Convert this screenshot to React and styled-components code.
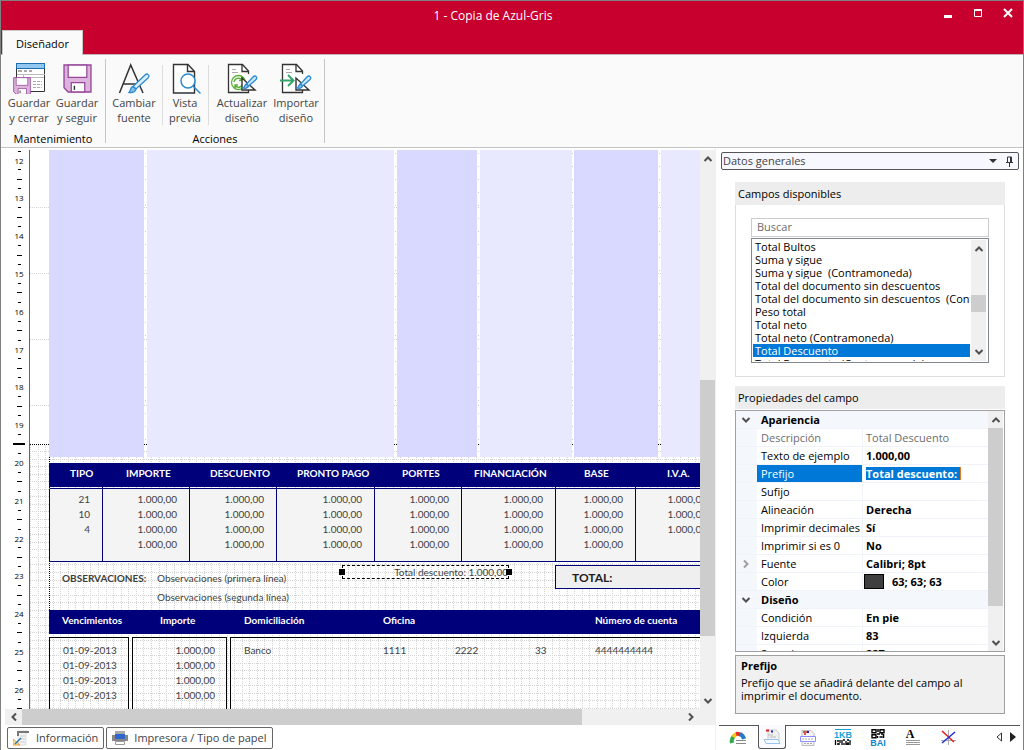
import React, { useState } from "react";
import styled, { createGlobalStyle, css } from "styled-components";

const GlobalStyle = createGlobalStyle`
  * {
    box-sizing: border-box;
  }

  body {
    margin: 0;
    background: #fff;
    color: #000;
    font: 11px/15px "Open Sans", "Noto Sans", sans-serif;
  }

  button,
  input,
  select {
    font: inherit;
    color: inherit;
    margin: 0;
    padding: 0;
    border: 0;
    background: none;
    border-radius: 0;
    outline: none;
  }

  h2 {
    margin: 0;
    font: inherit;
  }
`;

const Window = styled.div`
  display: flex;
  flex-direction: column;
  height: 100vh;
  border: 1px solid #808080;
  border-bottom: 0;
  overflow: hidden;
`;

const TitleBar = styled.header`
  display: grid;
  grid-template-columns: 1fr auto 1fr;
  grid-template-rows: 29px 24px;
  flex: none;
  background: #c8002d;
  border-bottom: 1px solid #c0b4b6;
`;

const Title = styled.h1`
  grid-column: 2;
  margin: 0;
  padding-right: 38px;
  color: #fff;
  font-size: 12px;
  font-weight: 400;
  line-height: 30px;
`;

const WindowButtons = styled.div`
  display: flex;
  justify-content: flex-end;
  align-items: center;
  padding: 0 5px 6px 0;
  gap: 10px;

  button {
    display: flex;
    justify-content: center;
    width: 20px;
  }
`;

const RibbonTab = styled.button`
  grid-row: 2;
  justify-self: start;
  width: 81px;
  height: 25px;
  margin-left: 1px;
  border: 1px solid #c8c8c8;
  border-bottom: 0;
  background: #fafafa;
  font-size: 11px;
`;

const Ribbon = styled.nav`
  display: flex;
  flex: none;
  height: 93px;
  padding: 4px 0;
  background: #fafafa;
  border-bottom: 1px solid #c4c4c4;
`;

const RibbonGroup = styled.section`
  display: flex;
  flex-direction: column;
  align-items: center;
  justify-content: space-between;
  padding: 1px 4px 0;
  border-right: 1px solid #c6c6c6;

  h2 {
    line-height: 9px;
  }
`;

const GroupButtons = styled.div`
  display: flex;
`;

const RibbonButton = styled.button`
  display: flex;
  flex-direction: column;
  align-items: center;
  width: ${({ $width }) => $width}px;
  color: #444;
  line-height: 15px;
  white-space: pre;

  svg {
    margin: 2px 0 1px;
  }
`;

const Separator = styled.span`
  width: 1px;
  height: 60px;
  margin: 5px 3px 0 4px;
  background: #dcdcdc;
`;

const Main = styled.main`
  display: flex;
  flex: 1;
  min-height: 0;
`;

const Designer = styled.section`
  display: flex;
  flex-direction: column;
  flex: 1;
  min-width: 0;
  padding: 2px 0 0 4px;
`;

const Workspace = styled.div`
  display: flex;
  flex: 1;
  min-height: 0;
`;

const RulerBox = styled.div`
  flex: none;
  width: 25px;
  overflow: hidden;
  border-right: 1px solid #666;

  text {
    font: 8px "Open Sans", sans-serif;
  }
`;

const Canvas = styled.div`
  position: relative;
  flex: 1;
  min-width: 0;
  overflow: hidden;
  color: #3f3f3f;
  font-family: Lato, sans-serif;
  font-size: 10px;
`;

const Grid = styled.svg`
  position: absolute;
  inset: 0;
  width: 100%;
  height: 100%;
`;

const Sheet = styled.div`
  position: relative;
  width: 1000px;
  padding-left: 19px;
`;

const Bands = styled.div`
  display: flex;
  height: 307px;
  margin-bottom: 6px;
`;

const Band = styled.div`
  width: ${({ $width }) => $width}px;
  margin-right: ${({ $gap }) => $gap}px;
  background: ${({ $dark }) => ($dark ? "#d9d9ff" : "#e8e8ff")};
`;

const TaxTable = styled.table`
  table-layout: fixed;
  width: 706px;
  border-spacing: 0;
  border-right: 1px solid #00007a;

  th {
    height: 24px;
    padding: 0 0 3px;
    background: #00007a;
    color: #fff;
    text-align: left;
  }

  td {
    height: 15px;
    padding: 0 12px 0 0;
    background: #f4f4f4;
    border-left: 1px solid #00007a;
    text-align: right;
    line-height: 15px;
  }

  td:last-child {
    padding-right: 48px;
  }

  tbody tr:first-child td {
    height: 2px;
    padding: 0;
    background: none;
    border-bottom: 1px solid #00007a;
  }

  tbody tr:first-child td:first-child {
    border-left-color: transparent;
  }

  tbody tr:nth-child(2) td {
    padding-top: 3px;
  }

  tbody tr:last-child td {
    padding-bottom: 9px;
    border-bottom: 1px solid #00007a;
  }
`;

const TaxHead = styled.th`
  && {
    padding-left: ${({ $pad }) => $pad}px;
  }
`;

const Remarks = styled.div`
  display: grid;
  grid-template-columns: 95px 398px 1fr;
  height: 48px;
  padding: 7px 0 0 13px;
  line-height: 19px;
`;

const TotalBox = styled.div`
  height: 24px;
  margin-top: -4px;
  padding-left: 16px;
  border: 1px solid #00007a;
  background: #efefef;
  color: #222;
  font-size: 12px;
  font-weight: 700;
  line-height: 24px;
`;

const SelectedField = styled.div`
  position: absolute;
  left: 312px;
  top: 415px;
  width: 167px;
  height: 14px;
  border: 1px dashed #000;
  text-align: right;
  line-height: 12px;

  &::before,
  &::after {
    content: "";
    position: absolute;
    top: 3px;
    width: 6px;
    height: 6px;
    background: #000;
  }

  &::before {
    left: -4px;
  }

  &::after {
    right: -4px;
  }
`;

const DueHead = styled.div`
  display: grid;
  grid-template-columns: 98px 84px 139px 212px 1fr;
  padding: 0 0 3px 13px;
  background: #00007a;
  color: #fff;
  font-weight: 700;
  line-height: 21px;
`;

const DueBody = styled.div`
  display: flex;
  gap: 3px;
  margin-top: 3px;
  line-height: 15px;
`;

const DueBox = styled.div`
  width: ${({ $width }) => $width}px;
  height: 130px;
  padding: 5px 11px 0 13px;
  border: 1px solid #000;
  text-align: ${({ $align }) => $align || "left"};
  white-space: nowrap;
`;

const BankRow = styled.div`
  display: grid;
  grid-template-columns: 139px 72px 80px 60px 1fr;
`;

const ScrollTrack = styled.div`
  display: flex;
  flex: none;
  align-items: center;
  background: #f0f0f0;

  ${({ $vertical }) =>
    $vertical
      ? css`
          flex-direction: column;
          width: 15px;
        `
      : css`
          height: 16px;
          padding-right: 16px;
        `}

  button {
    display: flex;
    flex: none;
    align-items: center;
    justify-content: center;
    width: ${({ $vertical }) => ($vertical ? 15 : 17)}px;
    height: 17px;
  }
`;

const ScrollThumb = styled.span`
  flex: ${({ $size }) => $size} 0 0;
  align-self: stretch;
  background: #cdcdcd;
`;

const ScrollSpace = styled.span`
  flex: ${({ $size }) => $size} 0 0;
`;

const FooterTabs = styled.div`
  display: flex;
  flex: none;
  gap: 2px;
  height: 25px;
  padding: 2px 2px 1px;
`;

const FooterTab = styled.button`
  display: flex;
  align-items: center;
  gap: 6px;
  padding: 0 5px 1px 5px;
  border: 1px solid #666;
  border-radius: 2px;
  color: #444;
  white-space: nowrap;
`;

const Sidebar = styled.aside`
  display: flex;
  flex-direction: column;
  flex: none;
  width: 308px;
  padding: 4px 3px 0;
  border-left: 1px solid #f0f0f0;
`;

const PanelPicker = styled.div`
  display: flex;
  align-items: center;
  flex: none;
  height: 18px;
  margin: 0 1px 0 2px;
  padding-right: 4px;
  border: 1px solid #555;
  border-radius: 2px;
  background: #f7f7ff;
  color: #444;

  select {
    flex: 1;
    height: 16px;
    padding-left: 1px;
    appearance: none;
    line-height: 16px;
  }

  svg {
    flex: none;
    margin-left: 8px;
  }
`;

const Panel = styled.section`
  display: flex;
  flex-direction: column;
  flex: none;
  margin: ${({ $top }) => $top}px 15px 0 16px;

  h2 {
    padding-left: 3px;
    background: #ededed;
    line-height: 23px;
    height: 23px;
  }
`;

const FieldPicker = styled.div`
  padding: 13px 15px;
  border: 1px solid #ddd;
  border-top: 0;
`;

const SearchInput = styled.input`
  display: block;
  width: 100%;
  height: 19px;
  margin-bottom: 1px;
  padding: 0 0 2px 5px;
  border: 1px solid #ccc;

  &::placeholder {
    color: #6d6d6d;
    opacity: 1;
  }
`;

const ListFrame = styled.div`
  display: flex;
  height: 125px;
  padding: 1px 2px 1px 1px;
  border: 1px solid #828790;
`;

const FieldList = styled.ul`
  flex: 1;
  min-width: 0;
  margin: 0;
  padding: 0;
  overflow: hidden;
  list-style: none;
`;

const FieldOption = styled.li`
  height: 13px;
  margin-right: 1px;
  padding-left: 2px;
  overflow: hidden;
  line-height: 13px;
  white-space: pre;
  cursor: default;
  background: ${({ $selected }) => ($selected ? "#0078d7" : "transparent")};
  color: ${({ $selected }) => ($selected ? "#fff" : "#000")};
`;

const PropertyFrame = styled.div`
  display: flex;
  height: 242px;
  margin-top: 1px;
  padding-right: 1px;
  border: 1px solid #a0a0a0;
  overflow: hidden;
`;

const PropertyScroll = styled.div`
  flex: 1;
  min-width: 0;
  overflow: hidden;
`;

const PropertyTable = styled.table`
  table-layout: fixed;
  width: 100%;
  border-spacing: 0;

  th,
  td {
    height: 18px;
    padding: 0 0 0 4px;
    border-bottom: 1px solid #f0f3f9;
    font-weight: 400;
    line-height: 17px;
    text-align: left;
    white-space: nowrap;
  }

  td:first-child {
    padding: 0 2px 0 0;
    background: #f4f7fc;
    text-align: center;
  }

  td:last-child {
    padding-left: 3px;
    border-left: 1px solid #f0f3f9;
  }

  td svg {
    display: block;
    margin: 0 auto;
  }
`;

const CategoryRow = styled.tr`
  background: #f4f7fc;

  th {
    font-weight: 700;
  }
`;

const PropertyRow = styled.tr`
  color: ${({ $muted }) => ($muted ? "#6d6d6d" : "#000")};

  th {
    background: ${({ $active }) => ($active ? "#0078d7" : "#fff")};
    color: ${({ $active }) => ($active ? "#fff" : "inherit")};
  }
`;

const ValueCell = styled.div`
  display: flex;
  align-items: center;
  height: 17px;
`;

const ValueInput = styled.input`
  width: 95px;
  height: 13px;
  font-weight: ${({ $muted }) => ($muted ? 400 : 700)};
  line-height: 13px;
  background: ${({ $active }) => ($active ? "#0078d7" : "none")};
  color: ${({ $active }) => ($active ? "#fff" : "inherit")};
  border-right: ${({ $active }) => ($active ? "1px solid #e87a1d" : "0")};
`;

const Swatch = styled.span`
  width: 20px;
  height: 15px;
  margin: 0 8px 0 -2px;
  border: 1px solid #000;
  background: #3f3f3f;
`;

const HelpBox = styled.div`
  height: 59px;
  margin-top: 3px;
  padding: 3px 5px;
  border: 1px solid #a0a0a0;
  background: #f0f0f0;
  line-height: 13px;

  strong {
    display: block;
    margin-bottom: 4px;
  }
`;

const IconTabs = styled.div`
  display: flex;
  flex: none;
  align-items: flex-start;
  height: 25px;
  margin-top: auto;
  padding-left: 1px;
  border-top: 1px solid #555;
`;

const IconTab = styled.button`
  display: flex;
  align-items: center;
  justify-content: center;
  width: ${({ $active }) => ($active ? 28 : 35)}px;
  height: 24px;

  ${({ $active }) =>
    $active &&
    css`
      margin: -1px 4px 0 3px;
      border: 1px solid #555;
      border-top: 0;
      border-radius: 0 0 3px 3px;
      background: #fafaff;
    `}
`;

const TabArrows = styled.div`
  display: flex;
  gap: 8px;
  margin: 6px 4px 0 auto;
`;

const Chevron = ({ dir = "down", color = "#505050" }) => {
  const angle = { down: 0, left: 90, up: 180, right: 270 }[dir];
  return (
    <svg width="10" height="10" viewBox="0 0 10 10" aria-hidden="true">
      <path
        d="M1.500 3 5 6.500 8.500 3"
        fill="none"
        stroke={color}
        strokeWidth="2"
        transform={`rotate(${angle} 5 5)`}
      />
    </svg>
  );
};

const ScrollBar = ({ vertical, before, thumb, after }) => (
  <ScrollTrack $vertical={vertical}>
    <button aria-label={vertical ? "Subir" : "Izquierda"}>
      <Chevron dir={vertical ? "up" : "left"} />
    </button>
    <ScrollSpace $size={before} />
    <ScrollThumb $size={thumb} />
    <ScrollSpace $size={after} />
    <button aria-label={vertical ? "Bajar" : "Derecha"}>
      <Chevron dir={vertical ? "down" : "right"} />
    </button>
  </ScrollTrack>
);

const Floppy = ({ x, y, size }) => (
  <svg x={x} y={y} width={size} height={size} viewBox="0 0 28 28">
    <path d="M1 1h26v26H5l-4-4z" fill="#dcb4dc" stroke="#96469b" strokeWidth="1.300" />
    <path d="M5 1h18v12H5z" fill="#fff" stroke="#96469b" strokeWidth="1.200" />
    <path d="M8 27v-9h13v9z" fill="#fff" stroke="#96469b" strokeWidth="1.200" />
    <path d="M11 21v4" stroke="#333" strokeWidth="1.400" />
  </svg>
);

const Pen = () => (
  <g fill="#fff" stroke="#2b8bd0" strokeWidth="1.300">
    <path d="M30 14.500c1.500 1 .5 2.500-.5 3.500l-7 6-2-2 6.500-7c1-1 2-1.500 3-.5z" fill="#cfe6f7" />
    <path d="M20.500 22c-2 .5-1.500 3-3.500 4 2 .8 5 .2 5.500-2z" fill="#83beec" />
  </g>
);

const SheetOutline = () => (
  <>
    <path d="M22.500 12V9l-6-6.500H2.500v28h20V28" fill="#fff" stroke="#333" strokeWidth="1.300" />
    <path d="M16 2.500V9.500h6.500" fill="none" stroke="#333" strokeWidth="1.300" />
    <path d="M6 7.500h4M6 10.500h6" stroke="#aaa" />
  </>
);

const ribbonIcons = {
  saveClose: (
    <>
      <path d="M3.500 1.500h28v28h-28z" fill="#fff" stroke="#333" />
      <path d="M3.500 1.500h28v5h-28z" fill="#92c8f0" stroke="#1a6fb5" />
      <path d="M5 9h4m2 0h3m2 0h3" stroke="#555" />
      <path d="M4 12.500h28M10.500 12v18M10 15.500h21" stroke="#bbb" />
      <path d="M20 19.500h9M20 22.500h9M20 25.500h9" stroke="#aaa" strokeDasharray="3 1" />
      <Floppy x={0} y={15} size={18} />
    </>
  ),
  save: <Floppy x={2} y={2} size={29} />,
  font: (
    <>
      <path d="M1.500 31 12.700 3 25 31M5.500 22h16" fill="none" stroke="#333" strokeWidth="1.500" />
      <g stroke="#2b8bd0" strokeWidth="1.300">
        <path d="M30 12.500c1.500 1 1 2.500 0 3.500L18 27l-3-2.500L27 13c1-1 2-1.300 3-.5z" fill="#dceefa" />
        <path d="M15 24.500c-3 .5-2 4-4 6 3 .5 6-.5 7-3.500z" fill="#83beec" />
      </g>
    </>
  ),
  preview: (
    <>
      <path d="M25.500 31H4.500V2.500H19l6.500 7z" fill="#fff" stroke="#333" strokeWidth="1.400" />
      <path d="M18.500 2.500v7h7" fill="none" stroke="#333" strokeWidth="1.400" />
      <circle cx="19" cy="19" r="7" fill="#fff" stroke="#2b8bd0" strokeWidth="1.500" />
      <path d="m24 24 7.500 7.500" stroke="#2b8bd0" strokeWidth="1.500" />
    </>
  ),
  refresh: (
    <>
      <SheetOutline />
      <circle cx="12.500" cy="20.500" r="7" fill="#fff" stroke="#5cb03a" strokeWidth="1.300" />
      <path d="M8 20a4.500 4.500 0 0 1 8-2m0-3v3.500h-3M17 21a4.500 4.500 0 0 1-8 2.500m0 3V23h3" fill="none" stroke="#5cb03a" strokeWidth="1.500" />
      <path d="M16 16v12h13z" fill="#fff" stroke="#333" strokeWidth="1.400" />
      <Pen />
    </>
  ),
  import: (
    <>
      <SheetOutline />
      <path d="M0 18.500h13M8 13l5.500 5.500L8 24" fill="none" stroke="#34a667" strokeWidth="2" />
      <path d="M16 16v12h13z" fill="#fff" stroke="#333" strokeWidth="1.400" />
      <Pen />
    </>
  ),
};

const RibbonIcon = ({ name }) => (
  <svg width="32" height="32" viewBox="0 0 32 32" aria-hidden="true">
    {ribbonIcons[name]}
  </svg>
);

const tabIcons = {
  gauge: (
    <>
      <path d="M3 14a7 7 0 0 1 2-7" fill="none" stroke="#2fa84f" strokeWidth="4" />
      <path d="M4 8a6 6 0 0 1 4-3" fill="none" stroke="#f2c91d" strokeWidth="4" />
      <path d="M7 5a6 6 0 0 1 5 1" fill="none" stroke="#e5302a" strokeWidth="4" />
      <path d="M11 5a7 7 0 0 1 4 5" fill="none" stroke="#2878c8" strokeWidth="4" />
      <path d="M7 11.500h10M7 14.500h10" stroke="#888" />
    </>
  ),
  page: (
    <>
      <path d="M5 2h8l3 3v10H5z" fill="#f0f0f0" stroke="#ccc" />
      <path d="M3 2.500h3" stroke="#d22" strokeWidth="2" />
      <path d="M8 3.500h2" stroke="#22a" strokeWidth="2" />
      <path d="M5 7h5M7 9h6" stroke="#bbb" />
      <path d="M1 11.500h14l2 4H3z" fill="#f4f8ff" stroke="#9ac4ea" />
    </>
  ),
  section: (
    <>
      <path d="M3 1.500h9l3 3v12H3z" fill="#f4f4f4" stroke="#bbb" />
      <path d="M4 3h4M5 5h2" stroke="#c22" strokeWidth="1.500" />
      <path d="M8 3h2" stroke="#22a" strokeWidth="2" />
      <path d="M1.500 7.500h15v5h-15z" fill="#fff" stroke="#8c8cff" />
      <path d="M3 10h12M5 14.500h8" stroke="#aaa" strokeDasharray="2 1" />
    </>
  ),
  bytes: (
    <>
      <path d="M1 .5h16" stroke="#1d9fd8" />
      <text x="9" y="9" textAnchor="middle" fill="#1d9fd8" fontSize="9" fontWeight="700" fontFamily="Liberation Sans">
        1KB
      </text>
      <path d="M1.500 11v5M3 12h2m0 2v2m1-5v3m2-3v5m1-5h2m-1 3v2m2-4v4m1-5h2m-1 2v3m2-5v5M3 15h2m7 0h3" stroke="#000" strokeWidth="1.300" />
    </>
  ),
  qr: (
    <>
      <path d="M3 .7h4v3H3zM11 .7h4v3h-4zM3 5.700h4v3H3z" fill="none" stroke="#000" strokeWidth="1.400" />
      <path d="M9 0v3M8 5h3M8.500 7v2m2-1h3m1-3v4M12 5h2" stroke="#000" strokeWidth="1.500" />
      <text x="9" y="17" textAnchor="middle" fill="#0d84cc" fontSize="9" fontWeight="700" fontFamily="Liberation Sans">
        BAI
      </text>
    </>
  ),
  text: (
    <>
      <text x="6" y="9" textAnchor="middle" fontSize="12" fontWeight="700" fontFamily="Liberation Serif">
        A
      </text>
      <path d="M2 11.500h14M2 13.500h14M2 15.500h14" stroke="#999" />
    </>
  ),
  axes: (
    <>
      <path d="M9.500 1v15M2 11.500h15" stroke="#aaa" />
      <path d="m3 2 12 11" stroke="#e02020" strokeWidth="1.600" />
      <path d="M16 3 3 14" stroke="#2030e0" strokeWidth="1.600" />
    </>
  ),
};

const sideTabs = [
  ["gauge", "Indicadores"],
  ["page", "Datos generales"],
  ["section", "Secciones"],
  ["bytes", "Código de barras"],
  ["qr", "Código QR"],
  ["text", "Texto"],
  ["axes", "Ejes"],
];

// One centimetre on the ruler and on the grid
const CM = 37.8;
const FIRST_Y = 11;

const Ruler = () => {
  const marks = Array.from({ length: 15 }, (_, i) => i + 12);
  return (
    <RulerBox>
      <svg width="24" height="100%" shapeRendering="crispEdges">
        <path d="M13 1.500h3" stroke="#000" />
        {marks.map((cm, i) => {
          const y = Math.floor(FIRST_Y + i * CM);
          const tick = (n) => Math.round(FIRST_Y + (i + n) * CM) - 0.5;
          return (
            <g key={cm} stroke="#000">
              <text x="14" y={y + 3} textAnchor="middle" stroke="none">
                {cm}
              </text>
              <path d={`M13 ${tick(0.25)}h3`} />
              {cm === 19 ? (
                <path d="M8 294h12" strokeWidth="2" />
              ) : (
                <path d={`M12 ${tick(0.5)}h5`} />
              )}
              <path d={`M13 ${tick(0.75)}h3`} />
            </g>
          );
        })}
      </svg>
    </RulerBox>
  );
};

const GridLines = () => {
  const steps = Array.from({ length: 140 }, (_, i) => Math.round(i * 7.56));
  return (
    <Grid shapeRendering="crispEdges" aria-hidden="true">
      <g stroke="#d4d4d4" strokeDasharray="1 1">
        {[57, 123, 189, 255].map((y) => (
          <line key={y} x1="0" x2="100%" y1={y + 0.5} y2={y + 0.5} />
        ))}
        {steps.map((n) => (
          <line key={`h${n}`} x1="0" x2="100%" y1={n + 301.5} y2={n + 301.5} />
        ))}
        {steps.map((n) => (
          <line key={`v${n}`} x1={n + 0.5} x2={n + 0.5} y1="295" y2="100%" />
        ))}
      </g>
      <g stroke="#ccc" strokeDasharray="1 12">
        {[115, 365, 448, 542, 629].map((x) => (
          <line key={x} x1={x + 0.5} x2={x + 0.5} y1="3" y2="294" />
        ))}
      </g>
      <g stroke="#000" strokeDasharray="1 1">
        <line x1="0" x2="100%" y1="294.5" y2="294.5" />
        <line x1="19.5" x2="19.5" y1="307" y2="460" />
      </g>
    </Grid>
  );
};

const bands = [
  [95, 3, true],
  [247, 3, false],
  [80, 3, true],
  [92, 2, false],
  [84, 3, true],
  [90, 3, false],
];

const taxColumns = [
  ["TIPO", 53, 21],
  ["IMPORTE", 87, 24],
  ["DESCUENTO", 87, 21],
  ["PRONTO PAGO", 98, 21],
  ["PORTES", 87, 28],
  ["FINANCIACIÓN", 94, 13],
  ["BASE", 80, 29],
  ["I.V.A.", 120, 32],
];

const amount = "1.000,00";
const taxRows = [
  ["21", ...Array(7).fill(amount)],
  ["10", ...Array(7).fill(amount)],
  ["4", ...Array(7).fill(amount)],
  ["", ...Array(6).fill(amount), ""],
];

const fields = [
  "Total Bultos",
  "Suma y sigue",
  "Suma y sigue  (Contramoneda)",
  "Total del documento sin descuentos",
  "Total del documento sin descuentos  (Contramoneda)",
  "Peso total",
  "Total neto",
  "Total neto (Contramoneda)",
  "Total Descuento",
  "Total Descuento (Contramoneda)",
];

const properties = [
  { category: "Apariencia" },
  { name: "Descripción", value: "Total Descuento", muted: true },
  { name: "Texto de ejemplo", value: "1.000,00" },
  { name: "Prefijo", value: "Total descuento: ", active: true },
  { name: "Sufijo", value: "" },
  { name: "Alineación", value: "Derecha" },
  { name: "Imprimir decimales", value: "Sí" },
  { name: "Imprimir si es 0", value: "No" },
  { name: "Fuente", value: "Calibri; 8pt", expandable: true },
  { name: "Color", value: "63; 63; 63", swatch: true },
  { category: "Diseño" },
  { name: "Condición", value: "En pie" },
  { name: "Izquierda", value: "83" },
  { name: "Superior", value: "227" },
];

const ReportCanvas = () => (
  <Canvas>
    <GridLines />
    <Sheet>
      <Bands>
        {bands.map(([width, gap, dark], i) => (
          <Band key={i} $width={width} $gap={gap} $dark={dark} />
        ))}
      </Bands>
      <TaxTable>
        <colgroup>
          {taxColumns.map(([name, width]) => (
            <col key={name} width={width} />
          ))}
        </colgroup>
        <thead>
          <tr>
            {taxColumns.map(([name, , pad]) => (
              <TaxHead key={name} $pad={pad}>
                {name}
              </TaxHead>
            ))}
          </tr>
        </thead>
        <tbody>
          <tr aria-hidden="true">
            {taxColumns.map(([name]) => (
              <td key={name} />
            ))}
          </tr>
          {taxRows.map((row, i) => (
            <tr key={i}>
              {row.map((cell, j) => (
                <td key={j}>{cell}</td>
              ))}
            </tr>
          ))}
        </tbody>
      </TaxTable>
      <Remarks>
        <strong>OBSERVACIONES:</strong>
        <div>
          Observaciones (primera línea)
          <br />
          Observaciones (segunda línea)
        </div>
        <TotalBox>TOTAL:</TotalBox>
      </Remarks>
      <DueHead>
        <span>Vencimientos</span>
        <span>Importe</span>
        <span>Domiciliación</span>
        <span>Oficina</span>
        <span>Número de cuenta</span>
      </DueHead>
      <DueBody>
        <DueBox $width={80}>
          {[0, 1, 2, 3].map((n) => (
            <div key={n}>01-09-2013</div>
          ))}
        </DueBox>
        <DueBox $width={95} $align="right">
          {[0, 1, 2, 3].map((n) => (
            <div key={n}>{amount}</div>
          ))}
        </DueBox>
        <DueBox $width={700}>
          <BankRow>
            <span>Banco</span>
            <span>1111</span>
            <span>2222</span>
            <span>33</span>
            <span>4444444444</span>
          </BankRow>
        </DueBox>
      </DueBody>
      <SelectedField>Total descuento: 1.000,00</SelectedField>
    </Sheet>
  </Canvas>
);

const App = () => {
  const [selected, setSelected] = useState("Total Descuento");
  const [search, setSearch] = useState("");

  return (
    <Window>
      <GlobalStyle />
      <TitleBar>
        <Title>1 - Copia de Azul-Gris</Title>
        <WindowButtons>
          <button aria-label="Minimizar">
            <svg width="10" height="10">
              <path d="M1 8.500h8" stroke="#fff" strokeWidth="3" />
            </svg>
          </button>
          <button aria-label="Maximizar">
            <svg width="10" height="10">
              <path d="M1.500 2v6.500h7V2M1 2h8" fill="none" stroke="#fff" />
              <path d="M1 2h8" stroke="#fff" strokeWidth="2" />
            </svg>
          </button>
          <button aria-label="Cerrar">
            <svg width="10" height="10">
              <path d="m1 1 8 8M9 1 1 9" stroke="#fff" strokeWidth="2" />
            </svg>
          </button>
        </WindowButtons>
        <RibbonTab>Diseñador</RibbonTab>
      </TitleBar>

      <Ribbon>
        <RibbonGroup>
          <GroupButtons>
            <RibbonButton $width={48}>
              <RibbonIcon name="saveClose" />
              {"Guardar\ny cerrar"}
            </RibbonButton>
            <RibbonButton $width={48}>
              <RibbonIcon name="save" />
              {"Guardar\ny seguir"}
            </RibbonButton>
          </GroupButtons>
          <h2>Mantenimiento</h2>
        </RibbonGroup>
        <RibbonGroup>
          <GroupButtons>
            <RibbonButton $width={48}>
              <RibbonIcon name="font" />
              {"Cambiar\nfuente"}
            </RibbonButton>
            <Separator />
            <RibbonButton $width={38}>
              <RibbonIcon name="preview" />
              {"Vista\nprevia"}
            </RibbonButton>
            <Separator />
            <RibbonButton $width={60}>
              <RibbonIcon name="refresh" />
              {"Actualizar\ndiseño"}
            </RibbonButton>
            <RibbonButton $width={48}>
              <RibbonIcon name="import" />
              {"Importar\ndiseño"}
            </RibbonButton>
          </GroupButtons>
          <h2>Acciones</h2>
        </RibbonGroup>
      </Ribbon>

      <Main>
        <Designer>
          <Workspace>
            <Ruler />
            <ReportCanvas />
            <ScrollBar vertical before={213} thumb={255} after={56} />
          </Workspace>
          <ScrollBar before={0} thumb={560} after={100} />
          <FooterTabs>
            <FooterTab>
              <svg width="17" height="16" aria-hidden="true">
                <path d="M5 1h10l-2 3v11H5z" fill="#f4f4f4" stroke="#ddd" />
                <path d="M4 2h12M5 2v4" stroke="#777" strokeWidth="2" />
                <path d="M7 6h5M7 9h5M7 12h5" stroke="#ccc" />
                <path d="M0 9v6h7z" fill="#ffd9a0" stroke="#f0a33a" />
                <path d="m2 14 6-6" stroke="#2878a8" strokeWidth="1.500" />
              </svg>
              Información
            </FooterTab>
            <FooterTab>
              <svg width="16" height="16" aria-hidden="true">
                <path d="M3 1h10v3H3z" fill="#aaa" />
                <path d="M0 5h3v6H0zM13 5h3v6h-3zM3 9h10v2H3z" fill="#888" />
                <path d="M3 4h10v5H3z" fill="#2f66cc" />
                <path d="M3.500 11.500h9v3h-9z" fill="#fff" stroke="#999" />
              </svg>
              Impresora / Tipo de papel
            </FooterTab>
          </FooterTabs>
        </Designer>

        <Sidebar>
          <PanelPicker>
            <select aria-label="Panel">
              <option>Datos generales</option>
            </select>
            <svg width="8" height="5" aria-hidden="true">
              <path d="M0 0h8L4 4z" fill="#333" />
            </svg>
            <svg width="9" height="11" aria-hidden="true">
              <path d="M2.500 6V1h4v5M5.500 1v5M1 6.500h7M4.500 7v4" fill="none" stroke="#333" />
            </svg>
          </PanelPicker>

          <Panel $top={12}>
            <h2>Campos disponibles</h2>
            <FieldPicker>
              <SearchInput
                aria-label="Buscar"
                placeholder="Buscar"
                value={search}
                onChange={(e) => setSearch(e.target.value)}
              />
              <ListFrame>
                <FieldList role="listbox" aria-label="Campos disponibles">
                  {fields.map((field) => (
                    <FieldOption
                      key={field}
                      role="option"
                      aria-selected={field === selected}
                      $selected={field === selected}
                      onClick={() => setSelected(field)}
                    >
                      {field}
                    </FieldOption>
                  ))}
                </FieldList>
                <ScrollBar vertical before={40} thumb={18} after={33} />
              </ListFrame>
            </FieldPicker>
          </Panel>

          <Panel $top={9}>
            <h2>Propiedades del campo</h2>
            <PropertyFrame>
              <PropertyScroll>
                <PropertyTable>
                  <colgroup>
                    <col width="21" />
                    <col width="105" />
                    <col />
                  </colgroup>
                  <tbody>
                    {properties.map((prop) =>
                      prop.category ? (
                        <CategoryRow key={prop.category}>
                          <td>
                            <Chevron />
                          </td>
                          <th colSpan={2}>{prop.category}</th>
                        </CategoryRow>
                      ) : (
                        <PropertyRow
                          key={prop.name}
                          $active={prop.active}
                          $muted={prop.muted}
                        >
                          <td>
                            {prop.expandable && (
                              <Chevron dir="right" color="#a0a0a0" />
                            )}
                          </td>
                          <th scope="row">{prop.name}</th>
                          <td>
                            <ValueCell>
                              {prop.swatch && <Swatch />}
                              <ValueInput
                                aria-label={prop.name}
                                defaultValue={prop.value}
                                readOnly={prop.muted}
                                $active={prop.active}
                                $muted={prop.muted}
                              />
                            </ValueCell>
                          </td>
                        </PropertyRow>
                      )
                    )}
                  </tbody>
                </PropertyTable>
              </PropertyScroll>
              <ScrollBar vertical before={0} thumb={180} after={28} />
            </PropertyFrame>
            <HelpBox>
              <strong>Prefijo</strong>
              Prefijo que se añadirá delante del campo al imprimir el documento.
            </HelpBox>
          </Panel>

          <IconTabs>
            {sideTabs.map(([icon, label]) => (
              <IconTab key={icon} aria-label={label} $active={icon === "page"}>
                <svg width="18" height="18" aria-hidden="true">
                  {tabIcons[icon]}
                </svg>
              </IconTab>
            ))}
            <TabArrows>
              <svg width="6" height="10" aria-hidden="true">
                <path d="M5.500 1v8L1 5z" fill="#fff" stroke="#333" />
              </svg>
              <svg width="6" height="10" aria-hidden="true">
                <path d="M0 0v10l6-5z" fill="#222" />
              </svg>
            </TabArrows>
          </IconTabs>
        </Sidebar>
      </Main>
    </Window>
  );
};

export default App;
